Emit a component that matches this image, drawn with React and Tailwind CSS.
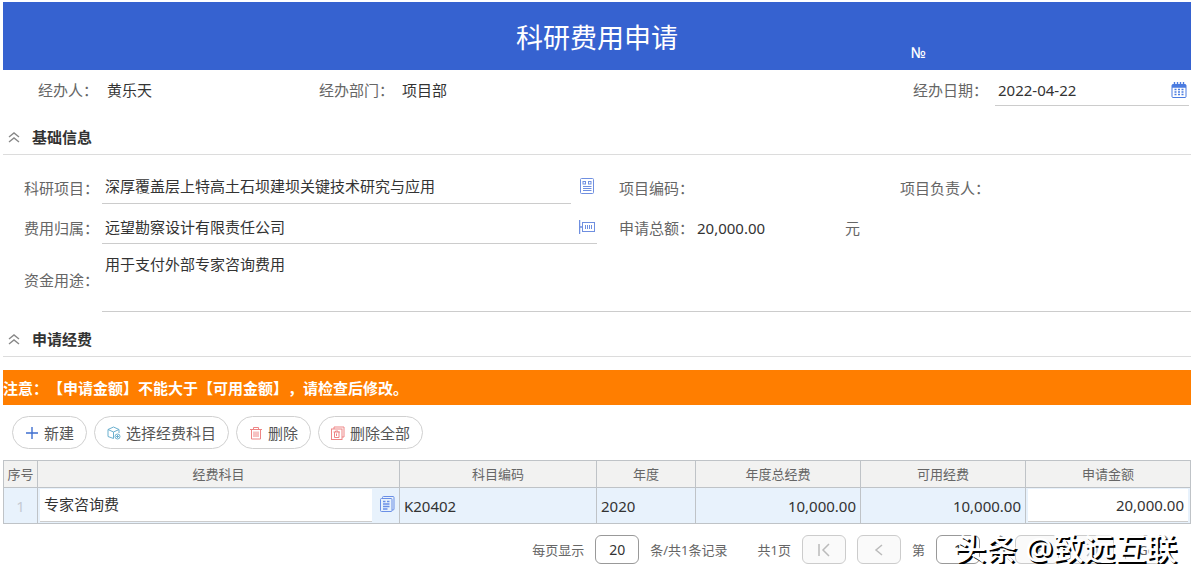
import { useState } from "react";

const columns = [
  { title: "序号", width: "w-[34px]" },
  { title: "经费科目", width: "w-[362px]" },
  { title: "科目编码", width: "w-[197px]" },
  { title: "年度", width: "w-[99px]" },
  { title: "年度总经费", width: "w-[165px]" },
  { title: "可用经费", width: "w-[165px]" },
  { title: "申请金额", width: "w-[165px]" },
];

function CalendarIcon() {
  return (
    <svg className="w-4 h-4" viewBox="0 0 16 16" fill="none" stroke="#4a7be0">
      <rect x="1" y="2.5" width="14" height="13" rx="1" />
      <path d="M1 3.5h14M1 5h14" strokeWidth="1.6" />
      <path d="M3.5 0v4M6.5 0v4M9.5 0v4M12.5 0v4" strokeWidth="1.4" />
      <path
        d="M3.5 7.5h2M7 7.5h2M10.5 7.5h2M3.5 10h2M7 10h2M10.5 10h2M3.5 12.5h2M7 12.5h2M10.5 12.5h2"
        strokeWidth="1.4"
      />
    </svg>
  );
}

function FormIcon() {
  return (
    <svg className="w-4 h-4" viewBox="0 0 16 16" fill="none" stroke="#6f8fe0">
      <rect x="1.5" y="0.5" width="13" height="15" rx="1" />
      <rect x="4" y="3.5" width="2.5" height="2.5" />
      <rect x="9.5" y="3.5" width="2.5" height="2.5" />
      <path d="M4 8.5h8.5M4 10.5h8.5M4 12.5h8.5" />
    </svg>
  );
}

function UnitIcon() {
  return (
    <svg className="w-4 h-4" viewBox="0 0 16 16" fill="none" stroke="#6f8fe0">
      <path d="M0.5 1v14M0.5 8h3" strokeWidth="1.5" />
      <rect x="3.5" y="3.5" width="12" height="9" />
      <path d="M6.5 6v4M8.5 6v4M10.5 6v4M12.5 6v4" />
    </svg>
  );
}

function CopyFormIcon() {
  return (
    <svg className="w-4 h-4" viewBox="0 0 16 16" fill="none" stroke="#6a8fe6">
      <path d="M3.5 2.5v-1q0-1 1-1h9.5q1 0 1 1v11.5q0 1-1 1h-1" />
      <rect x="1.5" y="2.5" width="11.5" height="13" rx="1" />
      <path d="M4 5.5h2.5M8 5.5h2.5M4 8h6.5M4 10.5h6.5M4 13h4.5" strokeWidth="1.3" />
    </svg>
  );
}

function PlusIcon() {
  return (
    <svg className="w-3.5 h-3.5" viewBox="0 0 14 14" fill="none" stroke="#3f6fd0" strokeWidth="1.4">
      <path d="M7 1v12M1 7h12" />
    </svg>
  );
}

function BoxIcon() {
  return (
    <svg className="w-3.5 h-3.5" viewBox="0 0 14 14" fill="none" stroke="#6bb0cf">
      <path d="M6.5 12.5L1 10.5V3.5L6.5 1L12 3.5V7M1 3.5L6.5 6L12 3.5M6.5 6v6.5" />
      <circle cx="10.5" cy="10.5" r="2.5" />
      <path d="M9 10.5h3M10.5 9v3" />
    </svg>
  );
}

function TrashIcon() {
  return (
    <svg className="w-3.5 h-3.5" viewBox="0 0 14 14" fill="none" stroke="#ee8585">
      <path d="M1 3.5h12M4.5 3.5v-2h5v2M2.5 3.5v9.5h9V3.5M5 5.5v5.5M7 5.5v5.5M9 5.5v5.5" />
    </svg>
  );
}

function TrashAllIcon() {
  return (
    <svg className="w-3.5 h-3.5" viewBox="0 0 14 14" fill="none" stroke="#ee8585">
      <path d="M3 3V1h10v10h-2" />
      <rect x="0.5" y="3" width="10.5" height="10.5" />
      <path d="M2.5 6h6.5M4.5 6V5h2.5v1M3.5 6v5.5h4.5V6M5.5 7.5v2.5" />
    </svg>
  );
}

function SectionTitle({ children }) {
  return (
    <div className="flex items-center gap-3 h-[35px] pl-[5px] border-b border-[#dcdcdc]">
      <svg className="w-3 h-3" viewBox="0 0 12 12" fill="none" stroke="#888" strokeWidth="1.4">
        <path d="M1 6l5-4 5 4M1 11l5-4 5 4" />
      </svg>
      <h2 className="font-bold text-[#333]">{children}</h2>
    </div>
  );
}

function ToolButton({ icon, children }) {
  return (
    <button className="flex items-center gap-[5px] h-[33px] px-3 rounded-full border border-[#d0d0d0] bg-white text-[#555]">
      {icon}
      {children}
    </button>
  );
}

function PageButton({ label, children }) {
  return (
    <button
      aria-label={label}
      className="flex items-center justify-center w-11 h-[29px] rounded-md border border-[#ccc] bg-[#fafafa]"
    >
      {children}
    </button>
  );
}

function Arrow({ d }) {
  return (
    <svg className="w-4 h-4" viewBox="0 0 16 16" fill="none" stroke="#bbb" strokeWidth="1.5">
      <path d={d} />
    </svg>
  );
}

export default function App() {
  const [form, setForm] = useState({
    date: "2022-04-22",
    project: "深厚覆盖层上特高土石坝建坝关键技术研究与应用",
    owner: "远望勘察设计有限责任公司",
    usage: "用于支付外部专家咨询费用",
    subject: "专家咨询费",
    amount: "20,000.00",
    pageSize: "20",
    page: "1",
  });

  const bind = (name) => ({
    id: name,
    value: form[name],
    onChange: (e) => setForm({ ...form, [name]: e.target.value }),
  });

  return (
    <main className="bg-white pt-0.5 pl-[3px] pr-1 text-[15px] leading-5 text-[#333] [text-spacing-trim:space-all] font-['Noto_Sans','Noto_Sans_CJK_SC',sans-serif]">
      {/* Title bar */}
      <header className="relative flex items-center justify-center h-[68px] pt-1 bg-[#3662d0] text-white">
        <h1 className="text-[27px] leading-9">科研费用申请</h1>
        <span className="absolute left-[76.4%] bottom-2 font-medium">№</span>
      </header>

      {/* Handler info */}
      <div className="grid grid-cols-[281fr_594fr_276fr] items-center h-10 pl-[35px] pr-0.5">
        <div className="flex min-w-0">
          <span className="w-[69px] text-[#666]">经办人：</span>
          <span>黄乐天</span>
        </div>
        <div className="flex min-w-0">
          <span className="w-[83px] text-[#666]">经办部门：</span>
          <span>项目部</span>
        </div>
        <div className="flex items-center min-w-0">
          <label htmlFor="date" className="w-[82px] shrink-0 text-[#666]">
            经办日期：
          </label>
          <div className="flex flex-1 items-center min-w-0 h-8 pl-[3px] pr-0.5 border-b border-[#ccc]">
            <input {...bind("date")} className="flex-1 min-w-0 outline-none" />
            <button aria-label="选择日期">
              <CalendarIcon />
            </button>
          </div>
        </div>
      </div>

      <div className="pt-2.5">
        <SectionTitle>基础信息</SectionTitle>
      </div>

      {/* Basic fields */}
      <section className="pt-4 pl-[21px]">
        <div className="grid grid-cols-[595fr_281fr_291fr]">
          <div className="flex items-center h-[33px] pr-6">
            <label htmlFor="project" className="w-[78px] shrink-0 text-[#666]">
              科研项目：
            </label>
            <input
              {...bind("project")}
              className="flex-1 min-w-0 h-[33px] pl-[3px] pb-1 border-b border-[#ccc] outline-none"
            />
            <button aria-label="选择项目" className="ml-2 pb-1">
              <FormIcon />
            </button>
          </div>
          <div className="flex items-center text-[#666]">项目编码：</div>
          <div className="flex items-center text-[#666]">项目负责人：</div>
        </div>

        <div className="grid grid-cols-[595fr_281fr_291fr] pt-[7px]">
          <div className="flex items-center h-[33px] pr-[22px]">
            <label htmlFor="owner" className="w-[78px] shrink-0 text-[#666]">
              费用归属：
            </label>
            <div className="flex flex-1 items-center h-[33px] pl-[3px] pr-0.5 border-b border-[#ccc]">
              <input {...bind("owner")} className="flex-1 min-w-0 outline-none" />
              <button aria-label="选择单位">
                <UnitIcon />
              </button>
            </div>
          </div>
          <div className="flex items-center">
            <span className="w-[78px] text-[#666]">申请总额：</span>
            <span className="flex-1">20,000.00</span>
            <span className="w-[55px] text-[#666]">元</span>
          </div>
        </div>

        <div className="flex items-center pt-1">
          <label htmlFor="usage" className="w-[78px] shrink-0 text-[#666]">
            资金用途：
          </label>
          <textarea
            {...bind("usage")}
            className="flex-1 h-16 pt-1.5 pl-[3px] border-b border-[#ccc] resize-none outline-none"
          />
        </div>
      </section>

      <div className="pt-2.5">
        <SectionTitle>申请经费</SectionTitle>
      </div>

      <p className="flex items-center h-[35px] mt-[13px] bg-[#ff7e00] font-bold text-white">
        注意：【申请金额】不能大于【可用金额】，请检查后修改。
      </p>

      {/* Row actions */}
      <div className="flex gap-[7px] py-[11px] pl-[9px]">
        <ToolButton icon={<PlusIcon />}>新建</ToolButton>
        <ToolButton icon={<BoxIcon />}>选择经费科目</ToolButton>
        <ToolButton icon={<TrashIcon />}>删除</ToolButton>
        <ToolButton icon={<TrashAllIcon />}>删除全部</ToolButton>
      </div>

      <table className="w-full table-fixed border-collapse">
        <thead>
          <tr className="h-[27px] bg-[#f2f2f1]">
            {columns.map((col) => (
              <th
                key={col.title}
                className={`${col.width} border border-[#bfc3c7] text-[13px] font-normal text-[#666]`}
              >
                {col.title}
              </th>
            ))}
          </tr>
        </thead>
        <tbody>
          <tr className="h-9 bg-[#e8f2fc]">
            <td className="border border-[#bfc3c7] text-center text-[#c5cbd3]">1</td>
            <td className="border border-[#bfc3c7] pl-0.5">
              <div className="flex items-center">
                <input
                  {...bind("subject")}
                  aria-label="经费科目"
                  className="flex-1 min-w-0 h-[33px] pl-1 pb-1 border-b border-[#ccc] bg-white outline-none"
                />
                <button aria-label="选择科目" className="px-1 ml-[3px] pb-1">
                  <CopyFormIcon />
                </button>
              </div>
            </td>
            <td className="border border-[#bfc3c7] px-1">K20402</td>
            <td className="border border-[#bfc3c7] px-1">2020</td>
            <td className="border border-[#bfc3c7] px-1 text-right">10,000.00</td>
            <td className="border border-[#bfc3c7] px-1 text-right">10,000.00</td>
            <td className="border border-[#bfc3c7] px-0.5">
              <input
                {...bind("amount")}
                aria-label="申请金额"
                className="block w-full h-[33px] pr-1 border-b border-[#ccc] bg-white text-right outline-none"
              />
            </td>
          </tr>
        </tbody>
      </table>

      {/* Pagination */}
      <footer className="relative flex items-center justify-end gap-[11px] pt-[11px] pr-[22px] text-[13px] text-[#666]">
        <label htmlFor="pageSize">每页显示</label>
        <input
          {...bind("pageSize")}
          className="w-11 h-[29px] rounded-md border border-[#999] text-center text-sm text-[#333] outline-none"
        />
        <span>条/共1条记录</span>
        <span className="pl-[19px]">共1页</span>
        <PageButton label="首页">
          <Arrow d="M3 2v12M13 2l-6 6 6 6" />
        </PageButton>
        <PageButton label="上一页">
          <Arrow d="M11 3L5 8l6 5" />
        </PageButton>
        <label htmlFor="page">第</label>
        <input
          {...bind("page")}
          className="w-11 h-[29px] rounded-md border border-[#999] text-center text-sm text-[#333] outline-none"
        />
        <span>页</span>
        <PageButton label="下一页">
          <Arrow d="M5 3l6 5-6 5" />
        </PageButton>
        <PageButton label="末页">
          <Arrow d="M13 2v12M3 2l6 6-6 6" />
        </PageButton>
        <button className="w-11 h-[29px] rounded-md border border-[#ccc] bg-white">Go</button>
        <span className="absolute right-3.5 top-1.5 text-[31px] leading-9 font-medium whitespace-nowrap text-white [text-shadow:2px_2px_0_#000]">
          头条 @致远互联
        </span>
      </footer>
    </main>
  );
}
